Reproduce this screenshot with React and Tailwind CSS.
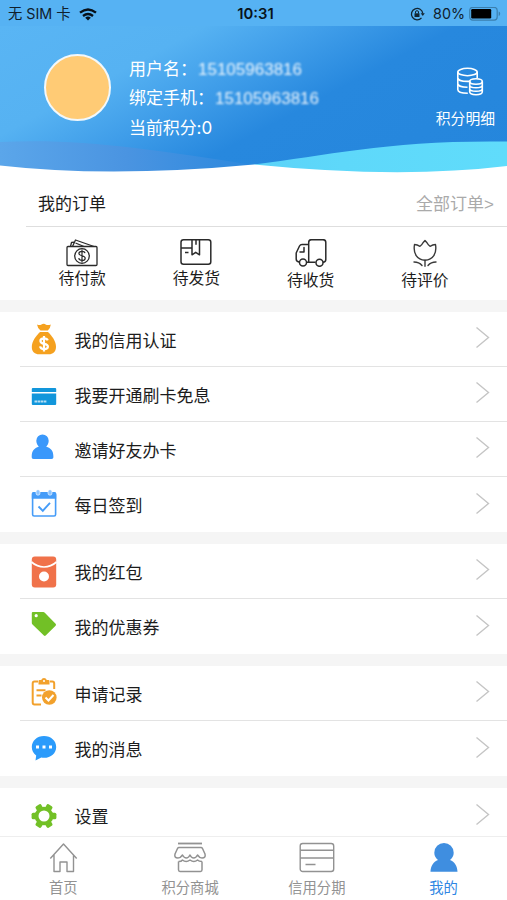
import clsx from 'clsx'

// 订单状态图标（线框）
const PayIcon = () => (
  <svg width="32" height="28" viewBox="0 0 32 28" fill="none" stroke="#2a2a2a" strokeWidth="1.3" strokeLinejoin="round">
    <rect x="1" y="7.5" width="30" height="19" rx="1" />
    <path d="M4.5 7.5 5.500 3.500 8 3.200M6.5 7.5 9.5 1 28 7.500M9.500 4 18 7.5" />
    <circle cx="16" cy="17" r="7.3" />
    <path d="M19 14.200c-.3-1.400-1.500-1.900-3-1.900-1.900 0-3.100.9-3.100 2.200 0 3 6.300 1.500 6.300 4.700 0 1.500-1.300 2.300-3.200 2.300-1.800 0-3-.8-3.300-2.300M16 10.500v13" strokeWidth="1.200" />
  </svg>
)

const BoxIcon = () => (
  <svg width="32" height="28" viewBox="0 0 32 28" fill="none" stroke="#2a2a2a" strokeWidth="1.5" strokeLinejoin="round">
    <rect x="1" y="0.800" width="29.800" height="24.500" rx="2.500" />
    <path d="M1 9h10.500M12 .8v15l3.700-2.500 3.800 2.500V.8M16 .8v5M5 13.500h3.500" />
  </svg>
)

const TruckIcon = () => (
  <svg width="32" height="28" viewBox="0 0 32 28" fill="none" stroke="#2a2a2a" strokeWidth="1.5" strokeLinejoin="round" strokeLinecap="round">
    <path d="M13.700 23.300V3.500q0-2.800 2.800-2.800h11.500q2.800 0 2.800 2.800v17q0 2.500-2.800 2.800M20 23.300h-8M4 23q-2.800-.5-2.800-3v-6L4.500 7q.8-1.500 2.500-1.500h6.700" />
    <path d="M9 8.500V13H5" />
    <circle cx="8" cy="23.500" r="3.500" fill="#fff" />
    <circle cx="24.500" cy="23.800" r="3.500" fill="#fff" />
  </svg>
)

const FlowerIcon = () => (
  <svg width="32" height="28" viewBox="0 0 32 28" fill="none" stroke="#3a3a3a" strokeWidth="1.400" strokeLinejoin="round" strokeLinecap="round">
    <path d="M5.500 5.500q2.700.2 5.500 1.800 2-1.500 3-3.500l2-2.300 2 2.300q1 2 3 3.500 2.800-1.600 5.500-1.800c1.500 9-2.500 15.700-10.500 15.700S4 14.500 5.500 5.500Z" />
    <path d="M16 21.200V27.300M5 23q5 0 8 3.500M27 23q-5 0-8 3.500" />
  </svg>
)

const CoinsIcon = () => (
  <svg width="28" height="29" viewBox="0 0 28 29" fill="none" stroke="#fff" strokeWidth="1.600">
    <ellipse cx="11.500" cy="5" rx="9.700" ry="3.700" />
    <path d="M1.800 5v17.500c0 2.200 4 3.700 10 3.700M21.200 5v6M1.800 10.700c0 2.200 4.300 3.700 9.700 3.700 1.200 0 2 0 2.800-.2M1.800 16.600c0 2.200 4.300 3.700 9.700 3.700" />
    <ellipse cx="20" cy="14.500" rx="6.300" ry="2.700" />
    <path d="M13.700 14.500v10.300c0 1.600 2.700 2.900 6.300 2.900s6.300-1.300 6.300-2.900V14.500M13.700 18c0 1.600 2.700 2.800 6.300 2.800s6.300-1.200 6.300-2.800M13.700 21.500c0 1.600 2.700 2.800 6.300 2.800s6.300-1.200 6.300-2.800" />
  </svg>
)

// 菜单图标，统一 26x32 画布
const MenuSvg = ({ children }) => (
  <svg width="26" height="32" viewBox="0 0 26 32" fill="none">{children}</svg>
)

const BagIcon = () => (
  <MenuSvg>
    <path d="M6 1.500q2.500 1 4 .2 3-2 5 0Q17 2.600 19.800 1.500q-.3 3.500-3 6H9.500Q6.500 5 6 1.500Z" fill="#f5a11f" />
    <path d="M9 9h8c4 4 8 9 8 15 0 5-3.500 7.300-7 7.300H8C4 31.300.8 29 .8 24 .8 18 5 13 9 9Z" fill="#f5a11f" />
    <path d="M16.700 17.300c-.5-1.500-1.900-2-3.700-2-2.100 0-3.600.9-3.600 2.600 0 4 7.500 2 7.500 5.500 0 1.800-1.700 2.700-3.900 2.700-2.100 0-3.600-.8-3.900-2.700M13 13v15.500" stroke="#fff" strokeWidth="2.200" />
  </MenuSvg>
)

const CardIcon = () => (
  <MenuSvg>
    <path d="M1.800 8h22.400q1 0 1 1v3H.8V9q0-1 1-1Z" fill="#1296db" />
    <path d="M.8 13.500h24.400V24q0 1-1 1H1.800q-1 0-1-1Z" fill="#1296db" />
    <path d="M3.500 21.500h12" stroke="#b5def4" strokeWidth="2.200" strokeDasharray="2.600 .5" />
  </MenuSvg>
)

const UserIcon = () => (
  <MenuSvg>
    <path d="M11.500 3.500a6.200 6.200 0 0 0-6.200 6.200c0 2.500 1.300 4.500 2.500 6-4.500 1.300-7.100 4-7.100 10 0 1.500.5 2.200 2 2.200h17.700c1.500 0 2-.7 2-2.200 0-6-2.500-8.700-7.200-10 1.300-1.500 2.500-3.500 2.500-6a6.200 6.200 0 0 0-6.200-6.200Z" fill="#3a98fb" />
  </MenuSvg>
)

const CalendarIcon = () => (
  <MenuSvg>
    <rect x="1.600" y="5" width="23" height="23" rx="1.500" stroke="#459cf8" strokeWidth="1.600" />
    <path d="M.8 5.500q0-1.500 1.500-1.500h21.400q1.500 0 1.500 1.500v5.300H.8Z" fill="#459cf8" />
    <rect x="5" y="1.700" width="4" height="5.500" rx="2" fill="#8cc4ff" stroke="#fff" strokeWidth=".6" />
    <rect x="17" y="1.700" width="4" height="5.500" rx="2" fill="#8cc4ff" stroke="#fff" strokeWidth=".6" />
    <path d="m7.500 18.500 4.300 4.300 7.200-8" stroke="#459cf8" strokeWidth="1.900" />
  </MenuSvg>
)

const PacketIcon = () => (
  <MenuSvg>
    <rect x=".8" y=".5" width="24.400" height="31" rx="3" fill="#f0724a" />
    <path d="M.5 6Q6 11 13 11t12.500-5" stroke="#fff" strokeWidth="1.700" />
    <circle cx="13" cy="20.500" r="5" fill="#fff" />
  </MenuSvg>
)

const TagIcon = () => (
  <MenuSvg>
    <path d="M1.800 4h10.500q.8 0 1.500.7L24.600 15.800q.9 1 0 1.900l-9.900 9.900q-.9.900-1.800 0L1.500 16.500q-.7-.7-.7-1.500V5q0-1 1-1Z" fill="#72c026" />
    <circle cx="5.200" cy="7.700" r="1.600" fill="#fff" />
  </MenuSvg>
)

const RecordIcon = () => (
  <MenuSvg>
    <path d="M7 4.500H3.500Q1.700 4.500 1.700 6.500V25.500q0 2 1.800 2H10M19 4.500h2.300q1.900 0 1.900 2V12" stroke="#f2a12c" strokeWidth="2" />
    <path d="M7.500 4q0-1 1-1h1.700q.8-2 2.800-2t2.800 2h1.700q1 0 1 1v3.500h-11Z" fill="#f2a12c" />
    <circle cx="13" cy="4" r="1" fill="#fff" />
    <path d="M5.500 13.300h9M5.500 18.500h5" stroke="#f2a12c" strokeWidth="1.900" />
    <circle cx="18.300" cy="20.500" r="7.300" fill="#f2a12c" />
    <path d="m14.500 20.500 3 3 5-5.500" stroke="#fff" strokeWidth="2" />
  </MenuSvg>
)

const MessageIcon = () => (
  <MenuSvg>
    <path d="M13 4C6 4 .8 8.800.8 15c0 3.500 1.600 6.500 4.400 8.500L4.500 28.500l5.800-3c.9.200 1.800.3 2.700.3 7 0 12.200-4.800 12.200-10.900S20 4 13 4Z" fill="#2b9bfb" />
    <path d="M5 13.600h3v3H5zM11.500 13.600h3v3h-3zM18 13.600h3v3h-3z" fill="#fff" />
  </MenuSvg>
)

const GearIcon = () => (
  <MenuSvg>
    <g fill="#72c026">
      <circle cx="13" cy="16" r="9.300" />
      <rect x=".6" y="12.700" width="24.800" height="6.600" rx="1.500" />
      <rect x=".6" y="12.700" width="24.800" height="6.600" rx="1.500" transform="rotate(60 13 16)" />
      <rect x=".6" y="12.700" width="24.800" height="6.600" rx="1.500" transform="rotate(120 13 16)" />
    </g>
    <circle cx="13" cy="16" r="5.500" fill="#fff" />
  </MenuSvg>
)

// 底部导航图标
const HomeIcon = () => (
  <svg width="34" height="32" viewBox="0 0 34 32" fill="none" stroke="#929292" strokeWidth="1.400" strokeLinejoin="round">
    <path d="M4.300 17.500 17.500 3l13.200 14.500M8 14v16.500H14V21h7v9.500h6.500V14" />
  </svg>
)

const ShopIcon = () => (
  <svg width="34" height="32" viewBox="0 0 34 32" fill="none" stroke="#929292" strokeWidth="1.500" strokeLinejoin="round">
    <path d="M5 2.500h24" strokeWidth="1.800" />
    <path d="M6 6.500h22q1 0 1.500 1l2.500 5.500q1 4-3 4-2.500 0-4.500-3-1.500 3-3.800 3T17 14q-1.500 3-3.700 3T9.500 14q-2 3-4.500 3-4 0-3-4l2.500-5.500q.5-1 1.500-1Z" />
    <path d="M5.500 20.500v8.300q0 1.700 1.500 1.700h20.500q1.500 0 1.500-1.700v-8.300M5.500 20.500q3 0 4-1.500 3.500 3 7.500 0 4 3 7.500 0 1.500 1.500 4.500 1.500" />
  </svg>
)

const InstallmentIcon = () => (
  <svg width="36" height="32" viewBox="0 0 36 32" fill="none" stroke="#929292" strokeWidth="1.400">
    <rect x="1.200" y="2.500" width="33.500" height="28" rx="2.500" />
    <path d="M1.200 9.300h33.500M1.200 17h33.500M6.500 23.500h10" />
  </svg>
)

const MineIcon = () => (
  <svg width="34" height="32" viewBox="0 0 34 32" fill="#3f8ee0">
    <path d="M17 2a9.800 9.800 0 0 0-9.700 9.700c0 3 1.400 5.500 3.700 7.300-4.700 2-7.300 6-7.500 11.700h27c-.2-5.700-2.800-9.700-7.500-11.700 2.300-1.800 3.700-4.300 3.700-7.300A9.800 9.800 0 0 0 17 2Z" />
  </svg>
)

const ORDERS = [
  { label: '待付款', Icon: PayIcon, gap: '' },
  { label: '待发货', Icon: BoxIcon, gap: '' },
  { label: '待收货', Icon: TruckIcon, gap: 'pt-0.5' },
  { label: '待评价', Icon: FlowerIcon, gap: 'pt-0.5' },
]

const GROUPS = [
  [
    { label: '我的信用认证', Icon: BagIcon },
    { label: '我要开通刷卡免息', Icon: CardIcon, lift: 'pt-1' },
    { label: '邀请好友办卡', Icon: UserIcon, lift: 'pb-1' },
    { label: '每日签到', Icon: CalendarIcon, lift: 'pb-0.5' },
  ],
  [
    { label: '我的红包', Icon: PacketIcon, lift: 'pt-0.5' },
    { label: '我的优惠券', Icon: TagIcon, lift: 'pb-1.5' },
  ],
  [
    { label: '申请记录', Icon: RecordIcon },
    { label: '我的消息', Icon: MessageIcon, lift: 'pb-0.5' },
  ],
  [{ label: '设置', Icon: GearIcon }],
]

const TABS = [
  { label: '首页', Icon: HomeIcon },
  { label: '积分商城', Icon: ShopIcon },
  { label: '信用分期', Icon: InstallmentIcon },
  { label: '我的', Icon: MineIcon, active: true },
]

function StatusBar() {
  return (
    <div className="grid h-[26px] grid-cols-3 items-center bg-[#56b2f3] pl-2 pr-1.5 font-['Inter','Noto_Sans_CJK_SC',sans-serif] text-[14.300px] leading-5 text-[#10202c]">
      <div className="flex items-center gap-2 whitespace-pre pt-0.5">
        <span>无 SIM 卡</span>
        <svg width="18" height="13" viewBox="0 0 18 13" fill="none" stroke="#071019" strokeWidth="2.300">
          <path d="M1 4.700Q9-1.800 17 4.700M4 8q5-4 10 0" />
          <path d="m9 12.500-2.800-2.800q2.800-2.200 5.600 0Z" fill="#071019" stroke="none" />
        </svg>
      </div>
      <div className="pl-0.5 pt-0.5 text-center text-[14.800px] font-semibold text-[#08131b]">10:31</div>
      <div className="flex items-center justify-end pt-0.5">
        <svg className="mr-2" width="15" height="14" viewBox="0 0 15 14" fill="none" stroke="#122532" strokeWidth="1.300">
          <path d="M11.500 10.800A5.700 5.700 0 1 1 12.800 6.500" />
          <path d="m10.700 6.300 2.100 2.700 2-2.700Z" fill="#122532" stroke="none" />
          <rect x="4.500" y="6.300" width="5" height="3.700" fill="#122532" stroke="none" />
          <path d="M5.500 6.500V5q0-1.300 1.500-1.300T8.500 5v1.500" strokeWidth="1" />
        </svg>
        <span className="mr-1">80%</span>
        <svg width="32" height="15" viewBox="0 0 32 15" fill="none">
          <rect x=".7" y=".4" width="27.500" height="12.700" rx="3" stroke="#3b7fae" strokeWidth="1.200" />
          <rect x="2.200" y="2" width="20" height="9.500" rx="1.200" fill="#000" />
          <path d="M29.700 4.500V9q1.500-.5 1.500-2.200t-1.500-2.300Z" fill="#3b7fae" />
        </svg>
      </div>
    </div>
  )
}

function Profile() {
  return (
    <div className="relative h-[150px] bg-[linear-gradient(152deg,#59b5f4_0%,#56b2f2_26%,#3f9de9_42%,#2788de_58%,#2586dc_100%)]">
      {/* 底部波浪 */}
      <svg className="absolute inset-x-0 bottom-0" width="507" height="40" viewBox="0 0 507 40">
        <defs>
          <linearGradient id="waveLeft" gradientUnits="userSpaceOnUse" x1="0" y1="0" x2="254" y2="0">
            <stop offset="0" stopColor="#5ba6ea" />
            <stop offset=".5" stopColor="#4a94e1" />
            <stop offset=".8" stopColor="#388ddf" />
            <stop offset="1" stopColor="#2c88dd" />
          </linearGradient>
          <linearGradient id="waveRight">
            <stop offset="0" stopColor="#5bd3f8" />
            <stop offset=".35" stopColor="#5ed8fa" />
            <stop offset="1" stopColor="#60dcfb" />
          </linearGradient>
        </defs>
        <path d="M0 6C80 2 150 13 254 29V40H0Z" fill="url(#waveLeft)" />
        <path d="M254 28.500C330 19 390 4 507 5.500V40H254Z" fill="url(#waveRight)" />
        <path d="M0 29.500Q110 42 254 28.500 400 43 507 30V40H0Z" fill="#fff" />
      </svg>

      <div className="relative flex items-start pl-11">
        <div className="mt-[27.500px] size-[67px] shrink-0 rounded-full border-2 border-[#f2f8fb] bg-[#ffcb75]" />
        <div className="ml-[18px] mt-[28.500px] font-['Inter','Noto_Sans_CJK_SC',sans-serif] text-[17px] leading-[29.500px] text-white">
          <div className="flex">
            用户名：<span className="ml-px font-['Liberation_Sans',sans-serif] opacity-90 blur-[1px]">15105963816</span>
          </div>
          <div className="flex">
            绑定手机：<span className="ml-px font-['Liberation_Sans',sans-serif] opacity-90 blur-[1px]">15105963816</span>
          </div>
          <div className="tracking-[-0.1px]">当前积分:0</div>
        </div>
        <div className="ml-auto flex flex-col items-center pr-3 pt-[41px] text-white">
          <span className="pl-2.5"><CoinsIcon /></span>
          <span className="mt-[13px] text-[14.800px] leading-5">积分明细</span>
        </div>
      </div>
    </div>
  )
}

function MenuRow({ label, Icon, lift, last }) {
  return (
    <div className="flex h-[55px] pl-5">
      <div className={clsx('flex flex-1 items-center pl-[10.500px] pr-[17px]', !last && 'border-b border-[#e3e3e3]')}>
        <span className={lift}><Icon /></span>
        <span className="ml-[18px] pt-[5px] text-[17px] leading-6 text-[#1c1c1c]">{label}</span>
        <svg className="mb-[3px] ml-auto" width="15" height="23" viewBox="0 0 15 23" fill="none" stroke="#c5c5c5" strokeWidth="1.400">
          <path d="m1.500 1.500 12 10-12 10" />
        </svg>
      </div>
    </div>
  )
}

export default function App() {
  return (
    <div className="flex h-[900px] w-[507px] flex-col overflow-hidden bg-[#f5f5f5] font-['Liberation_Sans','Noto_Sans_CJK_SC',sans-serif]">
      <StatusBar />

      <div className="min-h-0 flex-1 overflow-hidden">
        <Profile />

        {/* 我的订单 */}
        <div className="h-[124px] bg-white">
          <div className="ml-[26px] flex h-[51px] items-center justify-between border-b border-[#dedede] pl-3 pr-[13px] pt-2 text-[17px]">
            <span className="text-[#1c1c1c]">我的订单</span>
            <span className="text-[#aaa]">全部订单&gt;</span>
          </div>
          <div className="grid grid-cols-4 pl-[25px] pr-[25px] pt-3">
            {ORDERS.map(({ label, Icon, gap }) => (
              <div key={label} className="flex flex-col items-center">
                <Icon />
                <span className={clsx('text-[15.800px] leading-6 text-[#1c1c1c]', gap)}>{label}</span>
              </div>
            ))}
          </div>
        </div>

        {GROUPS.map((items, gi) => (
          <div key={gi} className="mt-3 bg-white">
            {items.map((item, i) => (
              <MenuRow key={item.label} {...item} last={i === items.length - 1} />
            ))}
          </div>
        ))}
      </div>

      {/* 底部导航 */}
      <div className="grid h-16 shrink-0 grid-cols-4 border-t border-[#eee] bg-white">
        {TABS.map(({ label, Icon, active }) => (
          <div key={label} className="flex flex-col items-center pt-1">
            <Icon />
            <span className={clsx('mt-[5px] text-[14.300px] leading-5', active ? 'text-[#2f86e3]' : 'text-[#929292]')}>{label}</span>
          </div>
        ))}
      </div>
    </div>
  )
}
